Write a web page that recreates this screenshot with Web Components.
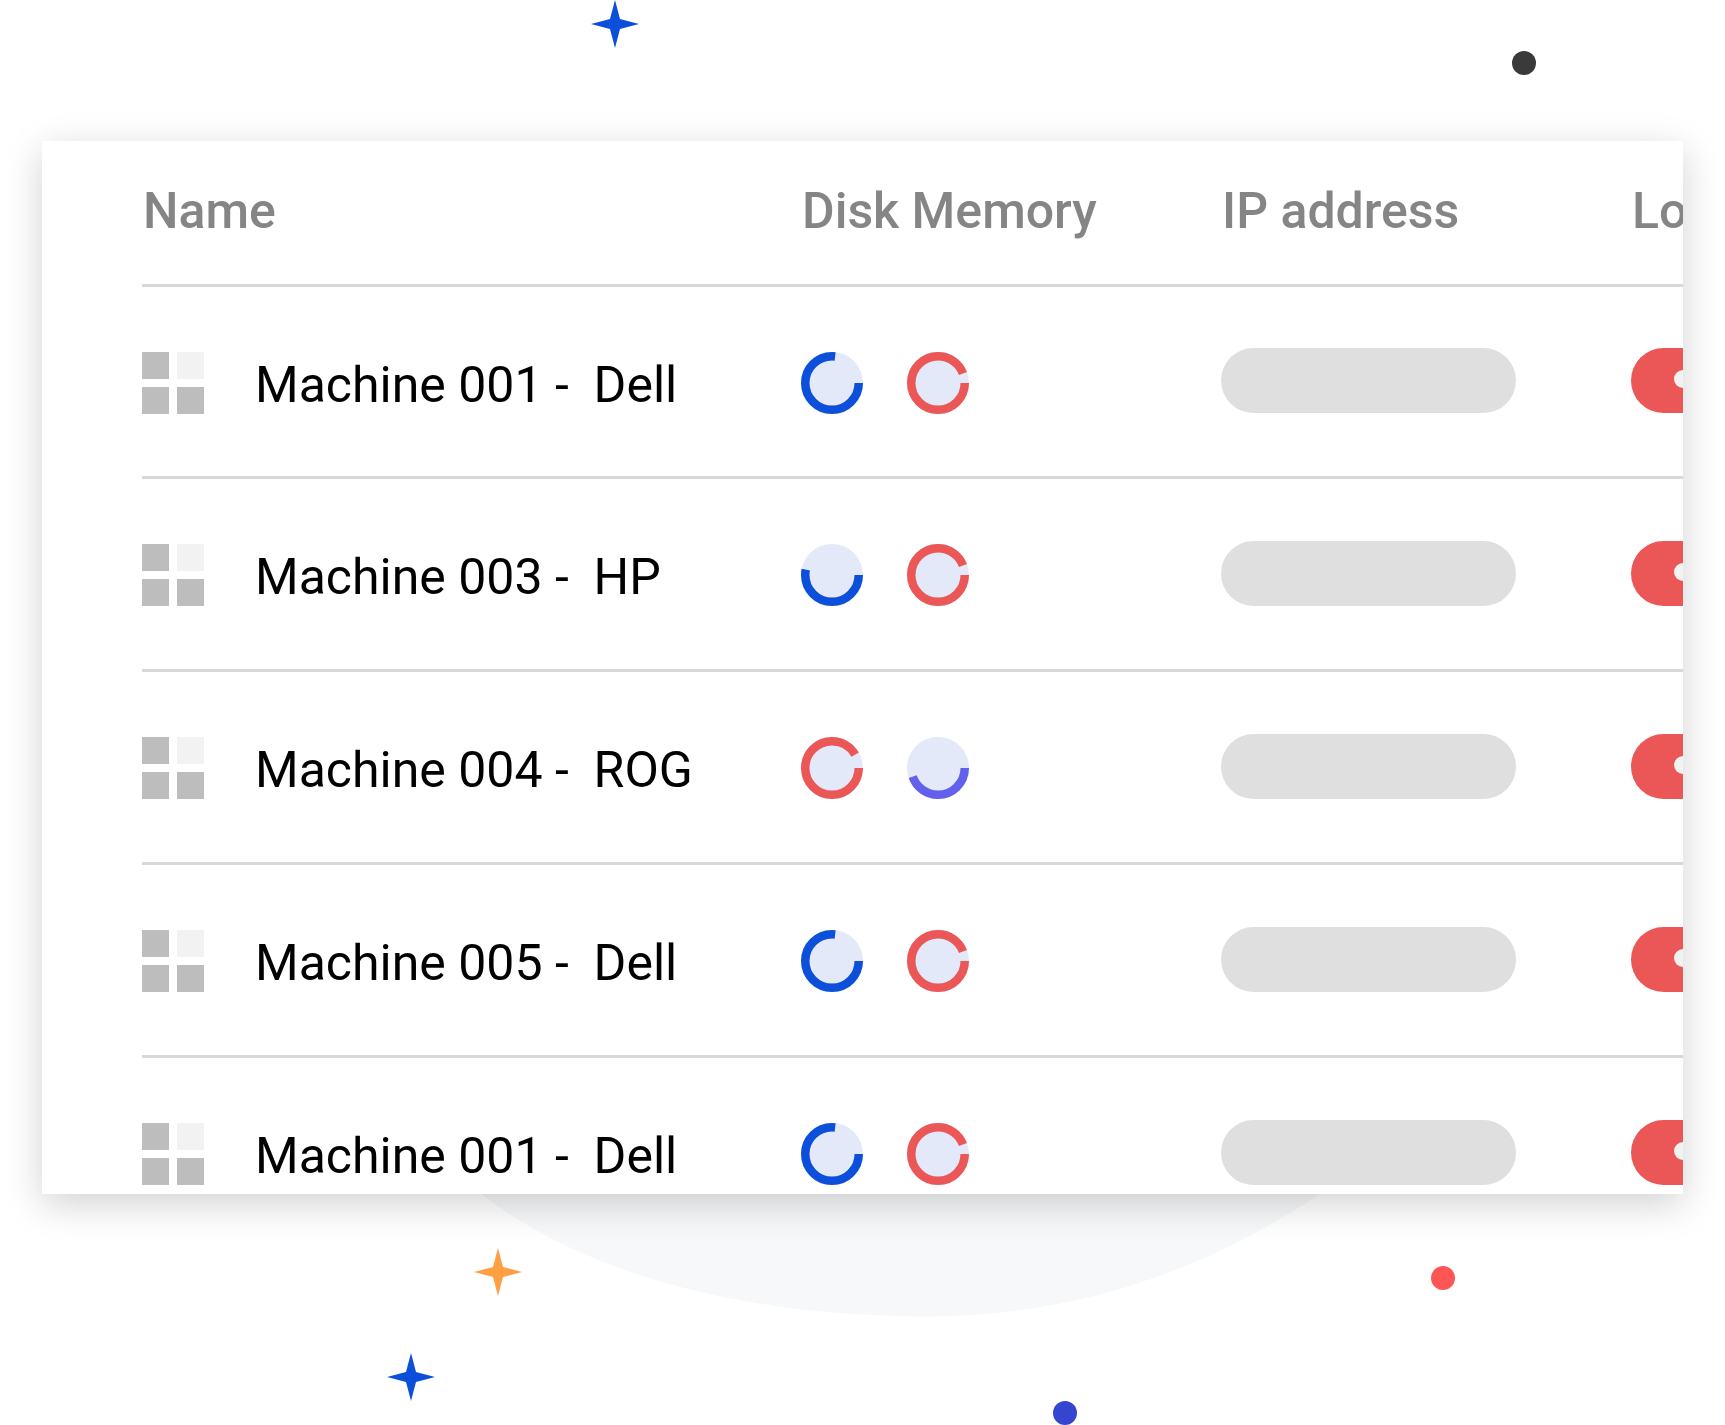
<!DOCTYPE html>
<html lang="en">
<head>
<meta charset="utf-8">
<title>Machines</title>
<style>
  body { margin: 0; background: #fff; font-family: Roboto, "Liberation Sans", sans-serif; }
</style>
</head>
<body>
<machine-showcase></machine-showcase>
<script>
class BaseElement extends HTMLElement {
  connectedCallback() {
    if (!this.shadowRoot) this.attachShadow({ mode: 'open' }).innerHTML = this.render();
  }
}

customElements.define('spark-star', class extends BaseElement {
  render() {
    return `<style>:host{display:block;width:48px;height:48px;color:#0b4fdb}svg{display:block}</style>
      <svg viewBox="-24 -24 48 48" width="48" height="48" aria-hidden="true">
        <path fill="currentColor" d="M0-24 5-5 24 0 5 5 0 24-5 5-24 0-5-5Z"/></svg>`;
  }
});

customElements.define('accent-dot', class extends BaseElement {
  render() {
    return `<style>:host{display:block;width:24px;height:24px;border-radius:50%;background:var(--dot)}</style>`;
  }
});

customElements.define('backdrop-blob', class extends BaseElement {
  render() {
    return `<style>:host{display:block}svg{display:block}</style>
      <svg width="839" height="123" viewBox="481 1194 839 123" aria-hidden="true">
        <path fill="#f6f8fa" d="M481 1194C590 1278 750 1316 925 1316.500C1080 1316 1205 1270 1320 1194Z"/></svg>`;
  }
});

customElements.define('os-icon', class extends BaseElement {
  render() {
    return `<style>
      :host{display:grid;grid-template-columns:27px 27px;grid-template-rows:27px 27px;gap:8px;width:62px;height:62px}
      i{background:#bdbdbd}
      i:nth-of-type(2){background:#f2f2f2}</style><i></i><i></i><i></i><i></i>`;
  }
});

/* Ring gauge: the arc runs clockwise from three o'clock through [sweep] degrees. */
customElements.define('usage-ring', class extends BaseElement {
  render() {
    const sweep = Number(this.getAttribute('sweep'));
    const tone = { blue: '#0b4fdb', red: '#eb5757', violet: '#6360ee' }[this.getAttribute('tone')];
    return `<style>:host{display:block;width:62px;height:62px}svg{display:block}</style>
      <svg width="62" height="62" viewBox="0 0 62 62" aria-hidden="true">
        <circle cx="31" cy="31" r="31" fill="#e3e9f8"/>
        <circle cx="31" cy="31" r="26.750" fill="none" stroke="${tone}" stroke-width="8.500"
          pathLength="360" stroke-dasharray="${sweep} 360"/></svg>`;
  }
});

customElements.define('ip-pill', class extends BaseElement {
  render() {
    return `<style>:host{display:block;width:295px;height:65px;border-radius:33px;background:#dfdfdf}</style>`;
  }
});

customElements.define('location-pill', class extends BaseElement {
  render() {
    return `<style>
      :host{display:flex;align-items:center;box-sizing:border-box;width:200px;height:65px;padding:0 0 3px 43px;border-radius:33px;background:#eb5757}
      i{width:18px;height:18px;border-radius:50%;background:#f2f2f2}</style><i></i>`;
  }
});

customElements.define('machine-table', class extends BaseElement {
  render() {
    const dell = [['blue', 277], ['red', 339]];
    const machines = [
      ['001', 'Dell', dell],
      ['003', 'HP', [['blue', 192], ['red', 339]]],
      ['004', 'ROG', [['red', 330], ['violet', 161]]],
      ['005', 'Dell', dell],
      ['001', 'Dell', dell]
    ];
    const rows = machines.map(([id, brand, rings]) => `<tr>
      <td><div class="name"><os-icon></os-icon><span>Machine ${id} -  ${brand}</span></div></td>
      <td><div class="rings">${rings.map(([tone, sweep]) =>
        `<usage-ring tone="${tone}" sweep="${sweep}"></usage-ring>`).join('')}</div></td>
      <td class="pill"><ip-pill></ip-pill></td>
      <td class="pill"><location-pill></location-pill></td></tr>`).join('');
    return `<style>
      :host{display:block;overflow:hidden;padding-left:100px;background:#fff;
        box-shadow:0 10px 36px rgba(0,0,0,.18)}
      table{table-layout:fixed;width:1740px;margin-bottom:-57px;border-spacing:0}
      th,td{box-sizing:border-box;border-bottom:3px solid #d8d8d8;text-align:left;vertical-align:middle}
      th{height:146px;padding:0 0 4px 1px;font-size:50px;line-height:60px;font-weight:500;color:#858585}
      td{height:193px;padding:2px 0 0;font-size:50px;line-height:60px;color:#000}
      tr:first-child td{height:192px}
      td.pill{padding:0 0 2px}
      .name{display:flex;align-items:center;gap:51px;white-space:pre}
      .name span{padding-top:4px}
      .rings{display:flex;gap:44px}
    </style>
    <table>
      <colgroup><col style="width:659px"><col style="width:420px"><col style="width:410px"><col></colgroup>
      <thead><tr><th>Name</th><th>Disk Memory</th><th>IP address</th><th>Location</th></tr></thead>
      <tbody>${rows}</tbody>
    </table>`;
  }
});

customElements.define('machine-showcase', class extends BaseElement {
  render() {
    return `<style>
      :host{display:block;position:relative;overflow:hidden;padding:141px 42px 231px}
      machine-table{position:relative}
      spark-star,accent-dot,backdrop-blob{position:absolute}
    </style>
    <backdrop-blob style="left:481px;top:1194px"></backdrop-blob>
    <machine-table></machine-table>
    <spark-star style="left:591px;top:0"></spark-star>
    <spark-star style="left:474px;top:1248px;color:#ff9f43"></spark-star>
    <spark-star style="left:387px;top:1353px"></spark-star>
    <accent-dot style="left:1512px;top:51px;--dot:#3a3a3a"></accent-dot>
    <accent-dot style="left:1431px;top:1266px;--dot:#ff5555"></accent-dot>
    <accent-dot style="left:1053px;top:1401px;--dot:#3545d0"></accent-dot>`;
  }
});
</script>
</body>
</html>
